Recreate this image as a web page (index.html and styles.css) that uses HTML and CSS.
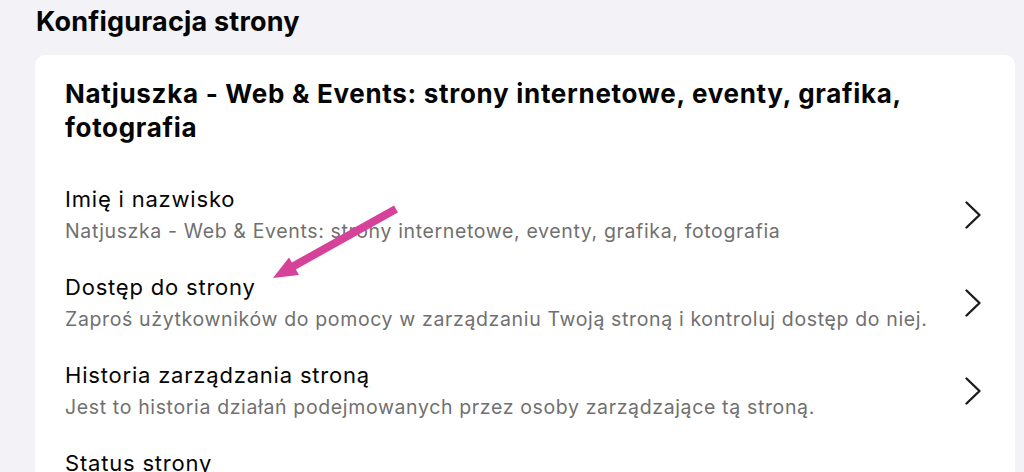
FILE: index.html
```html
<!DOCTYPE html>
<html lang="pl">
<head>
<meta charset="utf-8">
<title>Konfiguracja strony</title>
<link rel="stylesheet" href="styles.css">
</head>
<body>
<main class="page">
  <h1 class="page-title">Konfiguracja strony</h1>
  <section class="card">
    <h2 class="card-title">Natjuszka - Web &amp; Events: strony internetowe, eventy, grafika, fotografia</h2>
    <ul class="rows">
      <li class="row">
        <div class="row-text">
          <div class="row-title">Imię i nazwisko</div>
          <div class="row-sub">Natjuszka - Web &amp; Events: strony internetowe, eventy, grafika, fotografia</div>
        </div>
        <svg class="chev" viewBox="0 0 18 30" width="18" height="30"><path d="M2.5 2.5 L15.5 15 L2.5 27.5" fill="none" stroke="#1c1c1e" stroke-width="2.4" stroke-linecap="round" stroke-linejoin="round"/></svg>
      </li>
      <li class="row">
        <div class="row-text">
          <div class="row-title">Dostęp do strony</div>
          <div class="row-sub">Zaproś użytkowników do pomocy w zarządzaniu Twoją stroną i kontroluj dostęp do niej.</div>
        </div>
        <svg class="chev" viewBox="0 0 18 30" width="18" height="30"><path d="M2.5 2.5 L15.5 15 L2.5 27.5" fill="none" stroke="#1c1c1e" stroke-width="2.4" stroke-linecap="round" stroke-linejoin="round"/></svg>
      </li>
      <li class="row">
        <div class="row-text">
          <div class="row-title">Historia zarządzania stroną</div>
          <div class="row-sub">Jest to historia działań podejmowanych przez osoby zarządzające tą stroną.</div>
        </div>
        <svg class="chev" viewBox="0 0 18 30" width="18" height="30"><path d="M2.5 2.5 L15.5 15 L2.5 27.5" fill="none" stroke="#1c1c1e" stroke-width="2.4" stroke-linecap="round" stroke-linejoin="round"/></svg>
      </li>
      <li class="row row-partial">
        <div class="row-text">
          <div class="row-title">Status strony</div>
        </div>
      </li>
    </ul>
  </section>
</main>
<svg class="annotation" width="1024" height="472" viewBox="0 0 1024 472">
  <line x1="396" y1="209" x2="292" y2="267" stroke="#d6419a" stroke-width="8"/>
  <polygon points="273,278 299,275 289,257.6" fill="#d6419a"/>
</svg>
</body>
</html>
```
FILE: styles.css
```css
html, body {
  margin: 0;
  padding: 0;
}
body {
  background: #f2f2f7;
  font-family: Inter, "Noto Sans", sans-serif;
  color: #050505;
  width: 1024px;
  height: 472px;
  overflow: hidden;
  position: relative;
}
.page {
  padding: 2px 9px 0 35px;
}
.page-title {
  margin: 0 0 0 1px;
  font-size: 27px;
  line-height: 40px;
  font-weight: 700;
  letter-spacing: 0.2px;
}
.card {
  margin-top: 13px;
  background: #ffffff;
  border-radius: 10px;
  padding: 22px 32px 0 30px;
}
.card-title {
  margin: 0;
  font-size: 26px;
  line-height: 34px;
  font-weight: 700;
  letter-spacing: 0.7px;
}
.rows {
  list-style: none;
  margin: 26px 0 0;
  padding: 0;
}
.row {
  display: flex;
  align-items: center;
  justify-content: space-between;
  box-sizing: border-box;
  height: 88px;
}
.row-partial {
  align-items: flex-start;
  padding-top: 13px;
}
.row-text {
  display: flex;
  flex-direction: column;
}
.row-title {
  font-size: 22px;
  line-height: 30px;
  letter-spacing: 0.8px;
}
.row-sub {
  margin-top: 2px;
  font-size: 19.5px;
  line-height: 30px;
  letter-spacing: 0.64px;
  color: #707070;
}
.chev {
  flex: none;
  margin-right: 1px;
}
.annotation {
  position: absolute;
  left: 0;
  top: 0;
  pointer-events: none;
}
```
